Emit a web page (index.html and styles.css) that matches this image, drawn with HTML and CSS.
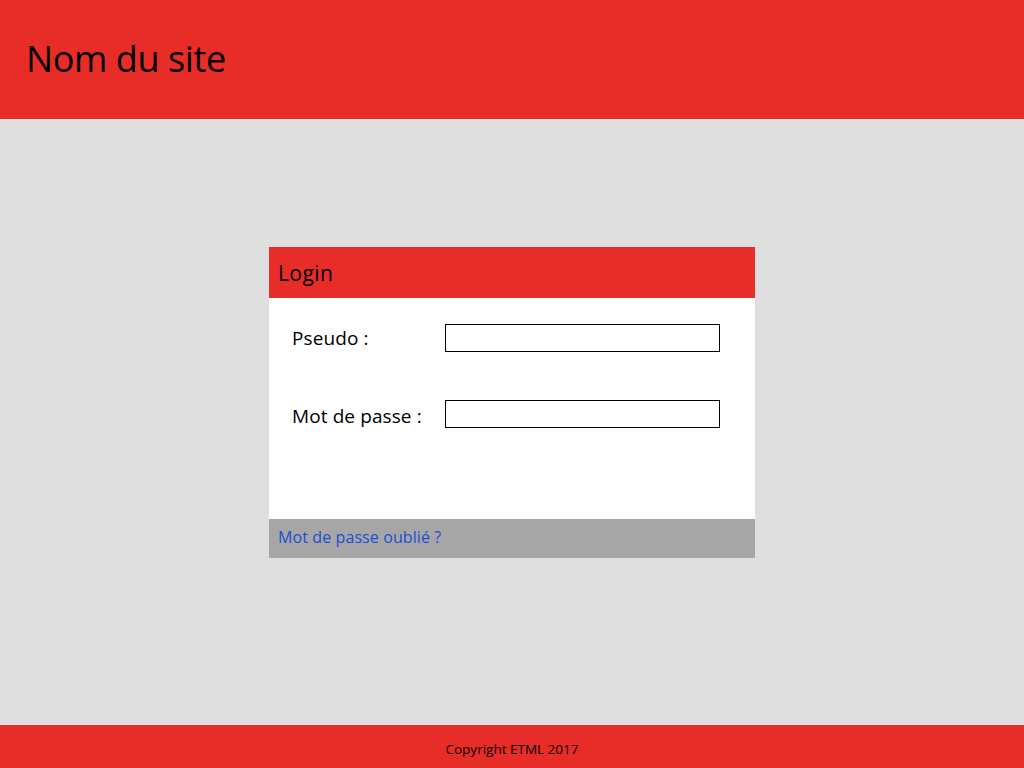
FILE: index.html
```html
<!DOCTYPE html>
<html lang="fr">
<head>
<meta charset="utf-8">
<title>Nom du site</title>
<link rel="stylesheet" href="styles.css">
</head>
<body>
<header class="site-header">
  <h1 class="site-title">Nom du site</h1>
</header>
<main class="site-main">
  <section class="login-card">
    <div class="login-head">Login</div>
    <form class="login-body">
      <div class="row">
        <label class="row-label" for="pseudo">Pseudo :</label>
        <input class="row-input" id="pseudo" type="text">
      </div>
      <div class="row">
        <label class="row-label" for="pass">Mot de passe :</label>
        <input class="row-input" id="pass" type="password">
      </div>
    </form>
    <div class="login-foot"><a class="forgot" href="#">Mot de passe oublié ?</a></div>
  </section>
</main>
<footer class="site-footer">Copyright ETML 2017</footer>
</body>
</html>
```
FILE: styles.css
```css
html, body { height: 100%; }
body {
  margin: 0;
  display: flex;
  flex-direction: column;
  background: #dfdfdf;
  font-family: "Open Sans", "Liberation Sans", sans-serif;
  color: #000;
}
.site-header {
  height: 119px;
  background: #e82c28;
  display: flex;
  align-items: center;
  padding-left: 26px;
  box-sizing: border-box;
}
.site-title {
  margin: 0;
  font-weight: 400;
  font-size: 36px;
  letter-spacing: -0.4px;
  padding-bottom: 2px;
}
.site-main {
  flex: 1;
  display: flex;
  justify-content: center;
  align-items: flex-start;
  padding-top: 128px;
}
.login-card {
  width: 486px;
  background: #fff;
}
.login-head {
  height: 51px;
  background: #e82c28;
  display: flex;
  align-items: center;
  padding-left: 9px;
  font-size: 21px;
  letter-spacing: 0.4px;
}
.login-body {
  height: 221px;
  box-sizing: border-box;
  padding: 26px 0 0 23px;
  margin: 0;
  display: flex;
  flex-direction: column;
  gap: 48px;
}
.row {
  display: flex;
  align-items: center;
  height: 28px;
}
.row-label {
  width: 153px;
  font-size: 19px;
  letter-spacing: 0.1px;
}
.row + .row .row-label { padding-top: 4px; }
.row-input {
  width: 275px;
  height: 28px;
  box-sizing: border-box;
  border: 1px solid #000;
  margin: 0;
  padding: 0 4px;
  background: #fff;
  outline: none;
}
.login-foot {
  height: 39px;
  background: #a6a6a6;
  display: flex;
  align-items: center;
  padding-left: 9px;
}
.forgot {
  color: #1c4fd2;
  text-decoration: none;
  font-size: 16px;
  letter-spacing: 0.1px;
  padding-bottom: 3px;
}
.site-footer {
  height: 43px;
  background: #e82c28;
  display: flex;
  align-items: center;
  justify-content: center;
  font-size: 13.5px;
  padding-top: 5px;
  box-sizing: border-box;
}
```
